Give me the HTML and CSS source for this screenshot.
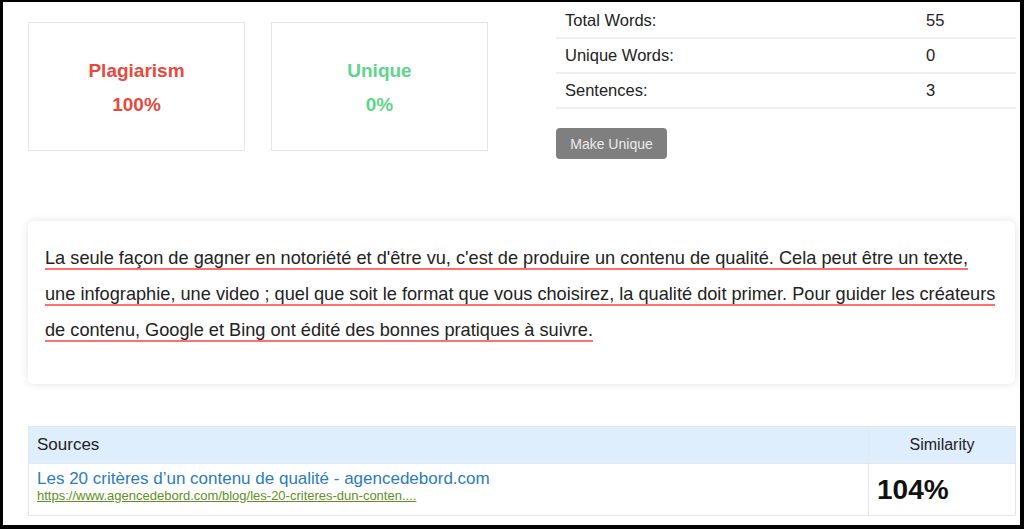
FILE: index.html
```html
<!DOCTYPE html>
<html lang="fr">
<head>
  <meta charset="UTF-8" />
  <title>Plagiarism Checker</title>
  <link rel="stylesheet" href="styles.css">
</head>
<body>
  <div class="frame">
    <div class="top">
      <div class="score plag">
        <span>Plagiarism</span>
        <span>100%</span>
      </div>
      <div class="score uniq">
        <span>Unique</span>
        <span>0%</span>
      </div>
      <div class="stats">
        <div class="stat-row"><span class="stat-label">Total Words:</span><span>55</span></div>
        <div class="stat-row"><span class="stat-label">Unique Words:</span><span>0</span></div>
        <div class="stat-row"><span class="stat-label">Sentences:</span><span>3</span></div>
        <button class="make-unique">Make Unique</button>
      </div>
    </div>

    <div class="text-box">
      <p><span class="hit">La seule façon de gagner en notoriété et d'être vu, c'est de produire un contenu de qualité. Cela peut être un texte, une infographie, une video ; quel que soit le format que vous choisirez, la qualité doit primer. Pour guider les créateurs de contenu, Google et Bing ont édité des bonnes pratiques à suivre.</span></p>
    </div>

    <table class="sources">
      <thead>
        <tr>
          <th class="col-source">Sources</th>
          <th class="col-sim">Similarity</th>
        </tr>
      </thead>
      <tbody>
        <tr>
          <td class="col-source">
            <a class="src-title" href="#">Les 20 critères d’un contenu de qualité - agencedebord.com</a>
            <a class="src-url" href="#">https://www.agencedebord.com/blog/les-20-criteres-dun-conten....</a>
          </td>
          <td class="col-sim"><span class="sim-value">104%</span></td>
        </tr>
      </tbody>
    </table>
  </div>
</body>
</html>
```

FILE: styles.css
```css
* {
  box-sizing: border-box;
}

body {
  margin: 0;
  font-family: "Liberation Sans", Arial, sans-serif;
  color: #222;
  background: #fff;
}

.frame {
  width: 1024px;
  height: 529px;
  border-style: solid;
  border-color: #000;
  border-width: 2px 4px 4px 3px;
  padding: 0 4px 0 25px;
  overflow: hidden;
}

.top {
  display: flex;
  align-items: flex-start;
}

.score {
  width: 217px;
  height: 129px;
  margin-top: 20px;
  margin-right: 26px;
  border: 1px solid #e6e6e6;
  display: flex;
  flex-direction: column;
  align-items: center;
  justify-content: center;
  gap: 12px;
  padding-top: 2px;
  font-size: 19px;
  font-weight: bold;
  line-height: 22px;
}

.plag {
  color: #e8493c;
}

.uniq {
  color: #5fd48c;
}

.stats {
  width: 460px;
  margin-left: 42px;
}

.stat-row {
  display: flex;
  height: 35px;
  align-items: center;
  padding-left: 9px;
  border-bottom: 2px solid #edf1f4;
  font-size: 16.5px;
}

.stat-row:first-child {
  height: 37px;
  padding-top: 2px;
}

.stat-label {
  width: 361px;
}

.make-unique {
  margin-top: 19px;
  width: 111px;
  height: 31px;
  background: #7f7f7f;
  color: #ececec;
  border: none;
  border-radius: 4px;
  font-family: "Liberation Sans", Arial, sans-serif;
  font-size: 14px;
}

.text-box {
  margin-top: 62px;
  width: 987px;
  height: 163px;
  padding: 19px 17px 0;
  border-radius: 6px;
  box-shadow: 0 0 8px rgba(0, 0, 0, 0.12);
}

.text-box p {
  margin: 0;
  font-size: 18.2px;
  line-height: 36px;
  color: #222;
}

.hit {
  border-bottom: 2px solid #ff6f6f;
}

.sources {
  margin-top: 42px;
  width: 988px;
  border-collapse: collapse;
}

.sources th,
.sources td {
  border: 1px solid #e2e8ee;
  text-align: left;
  font-weight: normal;
}

.sources th {
  background: #dfeefc;
  height: 37px;
  padding: 0 8px;
  font-size: 17px;
}

.sources th.col-sim {
  text-align: center;
  font-size: 16px;
}

.col-source {
  width: 840px;
}

.sources td {
  height: 52px;
  padding: 4px 8px;
  vertical-align: top;
}

.src-title {
  display: block;
  color: #2a7cc0;
  text-decoration: none;
  font-size: 17px;
  line-height: 21px;
}

.src-url {
  display: block;
  color: #5f8f25;
  font-size: 13px;
  line-height: 13px;
}

.sources td.col-sim {
  vertical-align: middle;
}

.sim-value {
  font-size: 28px;
  font-weight: bold;
  color: #111;
}
```
